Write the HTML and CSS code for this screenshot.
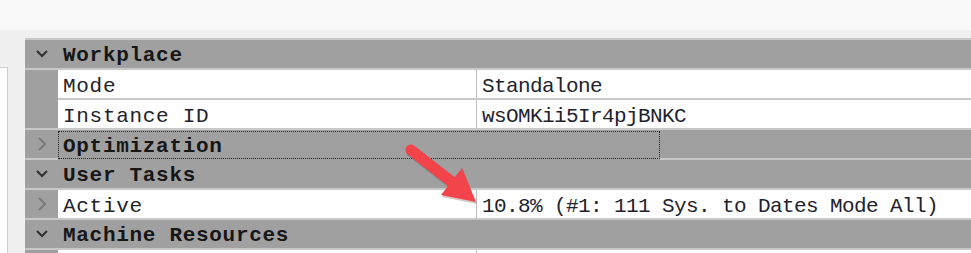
FILE: index.html
```html
<!DOCTYPE html>
<html lang="en">
<head>
  <meta charset="UTF-8">
  <title>Workplace Properties</title>
  <link rel="stylesheet" href="styles.css">
</head>
<body>
  <div class="topBar"></div>
  <div class="main">
    <div class="side">
      <div class="sideBox"></div>
    </div>
    <div class="grid">
      <div class="row hdr">
        <div class="gutter">
          <svg width="12" height="8" viewBox="0 0 12 8"><polyline class="chevDown" points="1,1 6,6 11,1"/></svg>
        </div>
        <div class="title">Workplace</div>
      </div>
      <div class="row">
        <div class="gutter"></div>
        <div class="label">Mode</div>
        <div class="value">Standalone</div>
      </div>
      <div class="row preHdr">
        <div class="gutter"></div>
        <div class="label">Instance ID</div>
        <div class="value">wsOMKii5Ir4pjBNKC</div>
      </div>
      <div class="row hdr">
        <div class="gutter">
          <svg width="8" height="14" viewBox="0 0 8 14"><polyline class="chevRight" points="1,1 7,7 1,13"/></svg>
        </div>
        <div class="title focused">Optimization</div>
      </div>
      <div class="row hdr">
        <div class="gutter">
          <svg width="12" height="8" viewBox="0 0 12 8"><polyline class="chevDown" points="1,1 6,6 11,1"/></svg>
        </div>
        <div class="title">User Tasks</div>
      </div>
      <div class="row preHdr">
        <div class="gutter">
          <svg width="8" height="14" viewBox="0 0 8 14"><polyline class="chevRight" points="1,1 7,7 1,13"/></svg>
        </div>
        <div class="label">Active</div>
        <div class="value">10.8% (#1: 111 Sys. to Dates Mode All)</div>
      </div>
      <div class="row hdr">
        <div class="gutter">
          <svg width="12" height="8" viewBox="0 0 12 8"><polyline class="chevDown" points="1,1 6,6 11,1"/></svg>
        </div>
        <div class="title">Machine Resources</div>
      </div>
      <div class="row">
        <div class="gutter"></div>
        <div class="label"></div>
        <div class="value"></div>
      </div>
    </div>
  </div>

  <!-- callout arrow drawn over the grid -->
  <svg class="callout" width="971" height="253" viewBox="0 0 971 253">
    <line x1="411" y1="150" x2="452" y2="182" stroke="#5a1a1a" stroke-opacity="0.25" stroke-width="11" stroke-linecap="round" transform="translate(1,2)"/>
    <polygon points="462,168 441,195 476,202" fill="#5a1a1a" fill-opacity="0.25" transform="translate(1,2)"/>
    <line x1="411" y1="150" x2="452" y2="182" stroke="#f2444a" stroke-width="11" stroke-linecap="round"/>
    <polygon points="462,168 441,195 476,202" fill="#f2444a"/>
  </svg>
</body>
</html>
```

FILE: styles.css
```css
html {
  overflow: hidden;
}
body {
  margin: 0;
  background: #f0f0f0;
  font-family: "Liberation Mono", "Courier New", monospace;
  font-size: 21px;
  color: #22222c;
  overflow: hidden;
  height: 253px;
}
.topBar {
  height: 30px;
  background: #f9f9f9;
}
.main {
  display: flex;
  padding-top: 8px;
  height: 215px;
}
.side {
  width: 25px;
  flex: none;
  display: flex;
  flex-direction: column;
  padding-top: 29px;
  box-sizing: border-box;
}
.sideBox {
  width: 7px;
  flex: 1;
  background: #ffffff;
  border-top: 1px solid #cfcfcf;
  border-right: 1px solid #cfcfcf;
}
.grid {
  flex: 1;
  background: #a0a0a0;
  border-top: 2px solid #c8c8c8;
  overflow: hidden;
}
.row {
  display: flex;
  height: 30px;
}
.row > div {
  box-sizing: border-box;
  border-bottom: 2px solid #c8c8c8;
}
.row > .gutter {
  border-bottom-color: #a0a0a0;
}
.hdr > .gutter,
.preHdr > .gutter {
  border-bottom-color: #c8c8c8;
}
.hdr > .title {
  flex: none;
}
.hdr::after {
  content: "";
  flex: 1;
  border-bottom: 2px solid #c8c8c8;
}
.gutter {
  width: 33px;
  flex: none;
  display: flex;
  align-items: center;
  justify-content: center;
}
.chevDown {
  fill: none;
  stroke: #303030;
  stroke-width: 2;
}
.chevRight {
  fill: none;
  stroke: #7a7a7a;
  stroke-width: 2;
}
.title {
  padding-left: 5px;
  padding-top: 5px;
  line-height: 22px;
  font-weight: bold;
  letter-spacing: 0.7px;
  color: #161616;
}
.row > .focused {
  width: 602px;
  height: 28px;
  margin-top: 1px;
  padding-top: 4px;
  padding-left: 4px;
  border: 1px dotted #222;
}
.label {
  width: 419px;
  flex: none;
  background: #ffffff;
  border-right: 1px solid #c0c0c0;
  padding-left: 5px;
  padding-top: 6px;
  line-height: 22px;
  letter-spacing: 0.7px;
}
.value {
  flex: 1;
  background: #ffffff;
  padding-left: 5px;
  padding-top: 6px;
  line-height: 22px;
  letter-spacing: -0.6px;
  white-space: nowrap;
}
.callout {
  position: absolute;
  left: 0;
  top: 0;
  pointer-events: none;
}
```
